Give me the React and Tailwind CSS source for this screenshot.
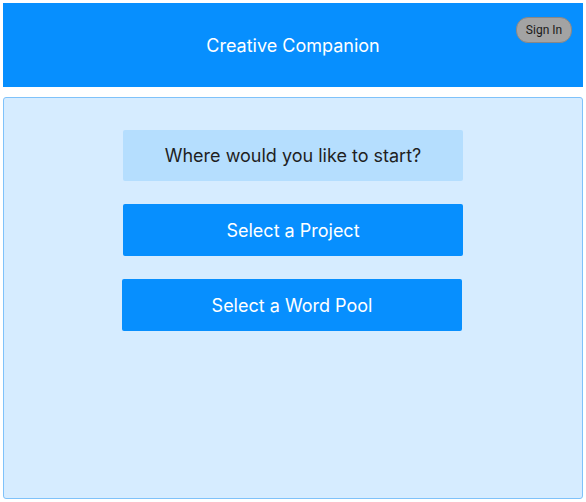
export default function App() {
  return (
    <div className="w-[586px] h-[502px] bg-white p-[3px] flex flex-col gap-[10px] font-['Inter',sans-serif]">
      <header className="relative h-[84px] bg-[#078ffe] flex items-center justify-center">
        <h1 className="text-white text-[18px] mt-[1px]">Creative Companion</h1>
        <button className="absolute right-[11px] top-[14px] w-[56px] h-[26px] rounded-[12px] bg-[#a3a3a3] border border-[#878787] text-[12px] text-[#1a1a1a] font-['Roboto',sans-serif]">
          Sign In
        </button>
      </header>
      <main className="flex-1 bg-[#d6ecff] border border-[#7fc2fa] rounded-[3px] flex flex-col items-center pt-[32px] gap-[23px]">
        <div className="w-[340px] h-[51px] bg-[#b5defe] rounded-[2px] flex items-center justify-center text-[18px] text-[#1f1f1f]">
          Where would you like to start?
        </div>
        <button className="w-[340px] h-[52px] bg-[#078ffe] rounded-[2px] text-white text-[18px]">
          Select a Project
        </button>
        <button className="w-[340px] h-[52px] bg-[#078ffe] rounded-[2px] text-white text-[18px] -ml-[2px]">
          Select a Word Pool
        </button>
      </main>
    </div>
  );
}
